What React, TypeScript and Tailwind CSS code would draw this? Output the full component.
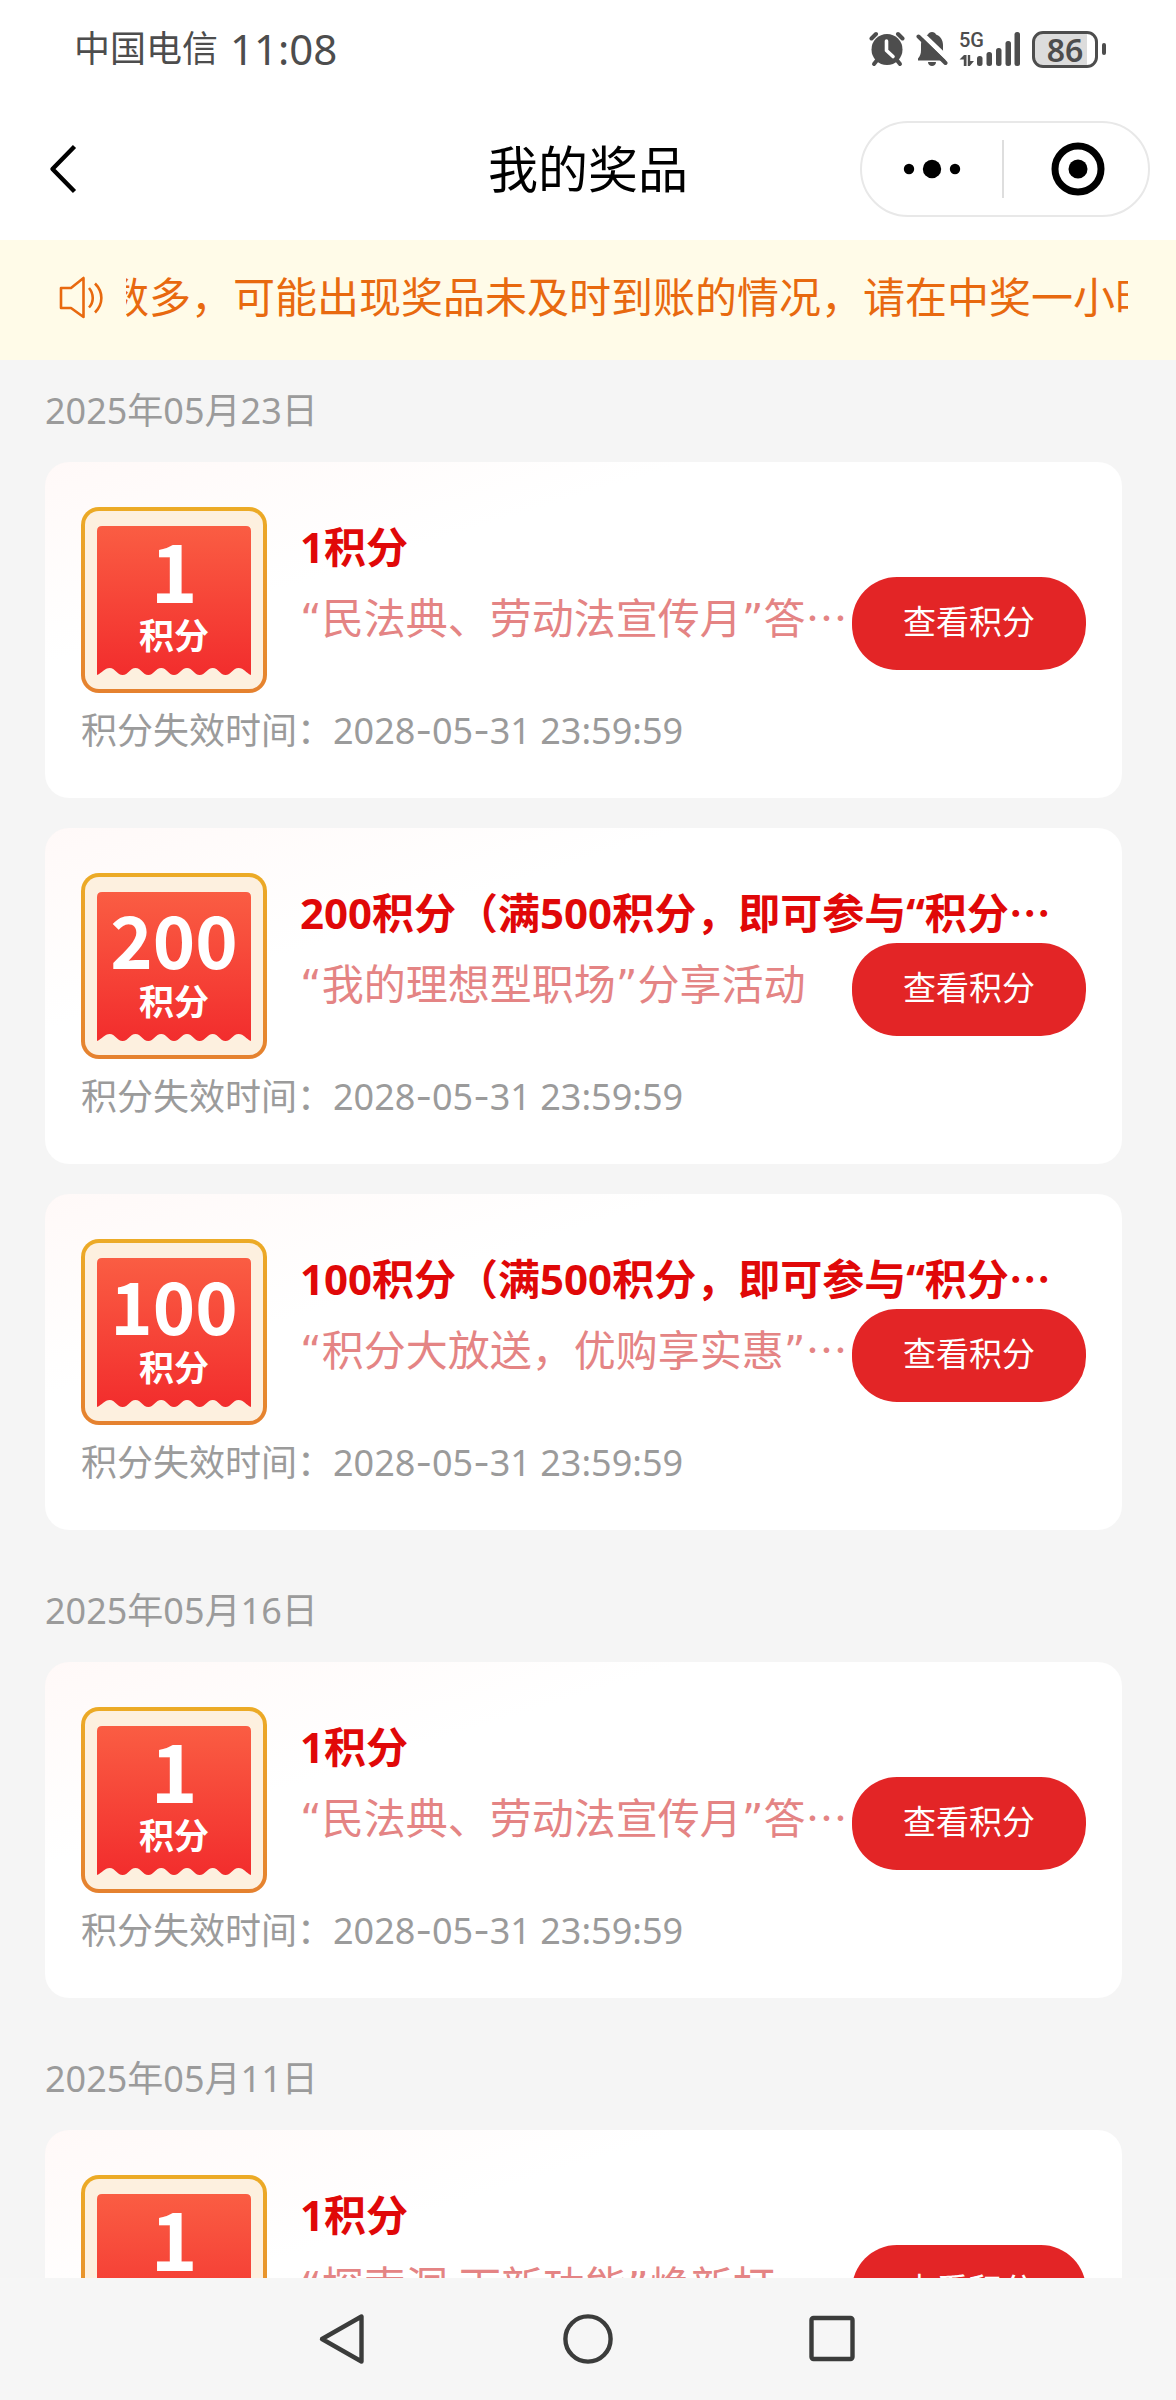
import React from "react";

type Prize = { points: string; title: string; activity: string; more?: boolean; titleMore?: boolean };

const expiry = "2028-05-31 23:59:59";
const longTail = "积分（满500积分，即可参与“积分";

const groups: { date: string; prizes: Prize[] }[] = [
  {
    date: "2025年05月23日",
    prizes: [
      { points: "1", title: "1积分", activity: "“民法典、劳动法宣传月”答", more: true },
      { points: "200", title: "200" + longTail, titleMore: true, activity: "“我的理想型职场”分享活动" },
      { points: "100", title: "100" + longTail, titleMore: true, activity: "“积分大放送，优购享实惠”", more: true },
    ],
  },
  {
    date: "2025年05月16日",
    prizes: [{ points: "1", title: "1积分", activity: "“民法典、劳动法宣传月”答", more: true }],
  },
  {
    date: "2025年05月11日",
    prizes: [{ points: "1", title: "1积分", activity: "“探索洞:下新功能”焕新打", more: true }],
  },
];

function AlarmIcon() {
  return (
    <svg width="36" height="36" viewBox="0 0 36 36" aria-hidden="true">
      <g stroke="#4d4d4d" strokeWidth="4" strokeLinecap="round" fill="none">
        <path d="M2.5 7.5 L7 3" />
        <path d="M33.500 7.500 L29 3" />
        <path d="M9 28 L5 33" />
        <path d="M27 28 L31 33" />
      </g>
      <circle cx="18" cy="18.500" r="15.500" fill="#4d4d4d" />
      <path d="M17.500 10 V19.500 L24 25.500" stroke="#fff" strokeWidth="3.600" strokeLinecap="round" strokeLinejoin="round" fill="none" />
    </svg>
  );
}

function MutedBellIcon() {
  return (
    <svg width="32" height="36" viewBox="0 0 32 36" aria-hidden="true">
      <path
        d="M16 1 C18 1 19.500 2 20 3.500 C24.500 5 27 9 27 14 V19 C27 23 28 25 30 27.500 V29.500 H2 V27.500 C4 25 5 23 5 19 V14 C5 9 7.500 5 12 3.500 C12.500 2 14 1 16 1 Z"
        fill="#4d4d4d"
      />
      <path d="M12 31 H20 C20 33.500 18 35 16 35 S12 33.500 12 31 Z" fill="#4d4d4d" />
      <path d="M5 2 L33 29" stroke="#fff" strokeWidth="5" />
      <path d="M2.500 5.500 L29.500 32" stroke="#4d4d4d" strokeWidth="4" strokeLinecap="round" />
    </svg>
  );
}

function SignalIcon() {
  return (
    <div className="relative h-9 w-[62px]">
      <span className="absolute left-0 top-0 font-['Roboto',sans-serif] text-[20px] font-medium leading-[18px]">5G</span>
      <svg width="62" height="36" viewBox="0 0 62 36" className="absolute inset-0" aria-hidden="true">
        <g fill="#4d4d4d">
          <path d="M0.500 28.500 L5 24 H7.500 V35 H4.800 V28.500 Z" />
          <path d="M15 30 L10.800 35 H8.800 V24 H11.200 V30 Z" />
          <rect x="18" y="25" width="5.500" height="10" rx="2.500" />
          <rect x="27.500" y="21" width="5.500" height="14" rx="2.500" />
          <rect x="37" y="17" width="5.500" height="18" rx="2.500" />
          <rect x="46.500" y="10" width="5.500" height="25" rx="2.500" />
          <rect x="55.500" y="1" width="5.500" height="34" rx="2.500" />
        </g>
      </svg>
    </div>
  );
}

function Battery() {
  return (
    <div className="flex items-center gap-1">
      <div className="h-[37px] w-[66px] rounded-[11px] border-[3px] border-[#4d4d4d] bg-gradient-to-r from-[#dcdcdc] from-[86%] to-white to-[86%] text-center text-[32px] font-semibold leading-[31px]">
        86
      </div>
      <div className="h-3 w-1 rounded-full bg-[#4d4d4d]" />
    </div>
  );
}

function StatusBar() {
  return (
    <div className="flex h-[98px] items-center justify-between pl-[74px] pr-[70px] text-[#4d4d4d]">
      <div className="flex items-center gap-3">
        <span className="text-[36px] leading-[48px]">中国电信</span>
        <span className="text-[42px] leading-[48px]">11:08</span>
      </div>
      <div className="flex items-center gap-[11px]">
        <AlarmIcon />
        <MutedBellIcon />
        <SignalIcon />
        <Battery />
      </div>
    </div>
  );
}

function NavBar() {
  return (
    <header className="grid h-[142px] grid-cols-[1fr_auto_1fr] items-center px-[26px]">
      <button type="button" aria-label="返回" className="justify-self-start pl-[19px]">
        <svg width="36" height="50" viewBox="0 0 36 50" fill="none" aria-hidden="true">
          <path d="M29.500 2.500 L7.500 25 L29.500 47.500" stroke="#000" strokeWidth="4.400" strokeLinejoin="round" />
        </svg>
      </button>
      <h1 className="text-[50px] leading-[60px] text-black">我的奖品</h1>
      <div className="flex h-24 w-[290px] items-center justify-self-end rounded-full border-2 border-[#e8e8e8]">
        <button type="button" aria-label="更多" className="flex flex-1 justify-center">
          <svg width="58" height="20" viewBox="0 0 58 20" aria-hidden="true">
            <circle cx="6" cy="10" r="5.200" />
            <circle cx="29" cy="10" r="9.200" />
            <circle cx="52" cy="10" r="5.200" />
          </svg>
        </button>
        <div className="h-[58px] w-0.5 bg-[#dedede]" />
        <button type="button" aria-label="关闭" className="flex flex-1 justify-center pl-1">
          <svg width="54" height="54" viewBox="0 0 54 54" aria-hidden="true">
            <circle cx="27" cy="27" r="23" fill="none" stroke="#000" strokeWidth="7" />
            <circle cx="27" cy="27" r="9.500" />
          </svg>
        </button>
      </div>
    </header>
  );
}

function Notice() {
  return (
    <div className="flex h-[120px] items-center gap-[22px] bg-[#fffbe8] pb-1.5 pl-[58px] pr-12 text-[#e8690f]">
      <svg width="46" height="44" viewBox="0 0 46 44" fill="none" stroke="currentColor" strokeWidth="2.600" strokeLinejoin="round" className="shrink-0" aria-hidden="true">
        <path d="M3 13 H13 L25.500 3 V42 L13 33 H3 Z" />
        <path d="M31 13 C36 19 36 27 31 32.500" />
        <path d="M37 8.500 C45.500 17 45.500 29 37 37.500" />
      </svg>
      <div className="flex-1 overflow-hidden">
        <p className="-ml-[19px] whitespace-nowrap text-[42px] leading-[60px]">
          数多，可能出现奖品未及时到账的情况，请在中奖一小时后查看
        </p>
      </div>
    </div>
  );
}

function Badge({ points }: { points: string }) {
  return (
    <div className="h-[186px] w-[186px] shrink-0 rounded-[18px] bg-gradient-to-b from-[#ecab26] to-[#e5812f] p-1">
      <div className="relative h-full rounded-[14px] bg-[#fdf0df] px-3 pt-[15px]">
        <svg viewBox="0 0 154 149" className="h-[149px] w-full" preserveAspectRatio="none" aria-hidden="true">
          <defs>
            <linearGradient id="ticket" x1="0" y1="0" x2="0" y2="1">
              <stop offset="0" stopColor="#fa5d43" />
              <stop offset="1" stopColor="#f22d2d" />
            </linearGradient>
          </defs>
          <path
            d="M0 5 Q0 0 5 0 H149 Q154 0 154 5 V149 C149 147 147 142 141.500 142 S134 149 128.500 149 S121.300 142 115.800 142 S108.200 149 102.700 149 S95.500 142 90 142 S82.500 149 77 149 S69.800 142 64.200 142 S56.800 149 51.300 149 S44 142 38.500 142 S31.200 149 25.700 149 S18 142 12.800 142 S5 147 0 149 Z"
            fill="url(#ticket)"
          />
        </svg>
        <div className="absolute inset-0 flex flex-col items-center pt-5 font-['Noto_Sans_CJK_SC',sans-serif] font-bold text-white">
          {points.length > 1 ? (
            <span className="text-[72px] leading-[82px]">{points}</span>
          ) : (
            <span className="pb-2 text-[80px] leading-[74px]">{points}</span>
          )}
          <span className="text-[35px] leading-[42px]">积分</span>
        </div>
      </div>
    </div>
  );
}

function Ellipsis() {
  return <span className="font-['Noto_Sans_CJK_SC',sans-serif] leading-none">…</span>;
}

/* Curly quotes take a wider face so that they stand clear of the Chinese text. */
function Quoted({ text }: { text: string }) {
  return (
    <>
      {text.split(/([“”])/).map((part, i) =>
        part === "“" || part === "”" ? (
          <span key={i} className="font-['DejaVu_Sans',sans-serif] leading-none">
            {part}
          </span>
        ) : (
          part
        ),
      )}
    </>
  );
}

/* Date separators use the longer Inter hyphen. */
function Timestamp({ value }: { value: string }) {
  return (
    <time>
      {value.split(/(-)/).map((part, i) =>
        part === "-" ? (
          <span key={i} className="font-['Inter',sans-serif] leading-none">
            -
          </span>
        ) : (
          part
        ),
      )}
    </time>
  );
}

function PrizeCard({ prize }: { prize: Prize }) {
  return (
    <article className="h-[336px] rounded-[24px] bg-white bg-gradient-to-br from-[#fff9f8] to-white to-30% px-9 pt-[45px]">
      <div className="flex gap-[33px]">
        <Badge points={prize.points} />
        <div className="min-w-0 flex-1 pt-4">
          <h3 className="mb-1.5 whitespace-nowrap text-[42px] font-bold leading-[48px] text-[#e00808]">
            {prize.title}
            {prize.titleMore && <Ellipsis />}
          </h3>
          <div className="flex">
            <p className="min-w-0 flex-1 whitespace-nowrap text-[42px] leading-[82px] text-[#e48484]">
              <Quoted text={prize.activity} />
              {prize.more && <Ellipsis />}
            </p>
            <button type="button" className="h-[93px] w-[234px] shrink-0 rounded-[45px] bg-[#e32526] pb-1 text-[33px] leading-[48px] text-white">
              查看积分
            </button>
          </div>
        </div>
      </div>
      <p className="pt-3.5 text-[36px] leading-[48px] text-[#9b9b9b]">
        积分失效时间：
        <Timestamp value={expiry} />
      </p>
    </article>
  );
}

function SystemNav() {
  return (
    <nav className="flex h-[122px] shrink-0 items-center justify-center gap-[195px] bg-[#f6f6f6]">
      <button type="button" aria-label="系统返回">
        <svg width="50" height="54" viewBox="0 0 50 54" fill="none" stroke="#3b3c3b" strokeWidth="4.400" strokeLinejoin="round" aria-hidden="true">
          <path d="M43.500 4.500 V49.500 L4 27 Z" />
        </svg>
      </button>
      <button type="button" aria-label="主屏幕">
        <svg width="50" height="54" viewBox="0 0 50 54" fill="none" stroke="#3b3c3b" strokeWidth="4.400" aria-hidden="true">
          <circle cx="25" cy="27" r="22.600" />
        </svg>
      </button>
      <button type="button" aria-label="最近任务">
        <svg width="50" height="54" viewBox="0 0 50 54" fill="none" stroke="#3b3c3b" strokeWidth="4.400" aria-hidden="true">
          <rect x="3.500" y="6" width="41" height="41" rx="2" />
        </svg>
      </button>
    </nav>
  );
}

export default function App() {
  return (
    <div className="flex h-screen flex-col overflow-hidden bg-white font-['Noto_Sans','Noto_Sans_CJK_SC',sans-serif]">
      <StatusBar />
      <NavBar />
      <Notice />
      <main className="min-h-0 flex-1 overflow-y-auto bg-[#f5f5f5] pl-[45px] pr-[54px] [scrollbar-width:none]">
        {groups.map((group) => (
          <section key={group.date} className="mb-[30px]">
            <h2 className="text-[36px] leading-[102px] text-[#9b9b9b]">{group.date}</h2>
            <div className="flex flex-col gap-[30px]">
              {group.prizes.map((prize) => (
                <PrizeCard key={prize.title + prize.activity} prize={prize} />
              ))}
            </div>
          </section>
        ))}
      </main>
      <SystemNav />
    </div>
  );
}
